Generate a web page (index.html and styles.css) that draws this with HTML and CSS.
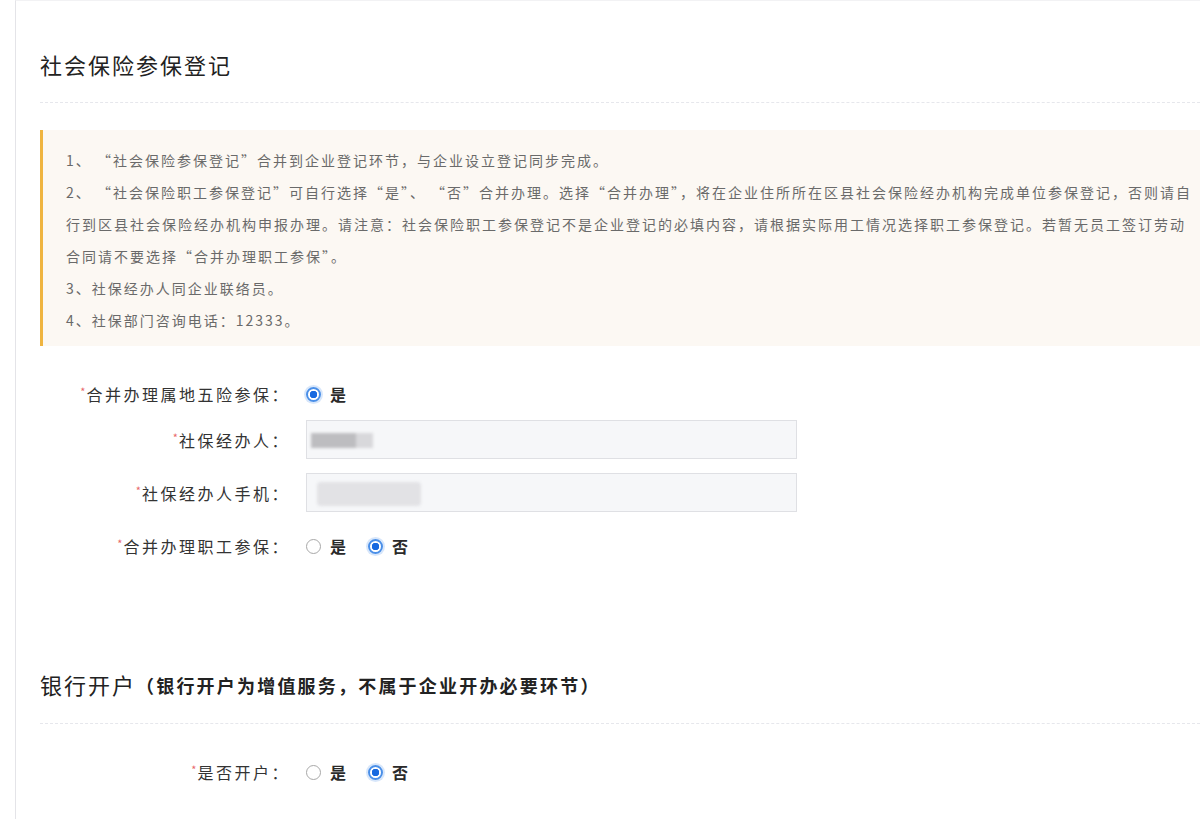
FILE: index.html
```html
<!DOCTYPE html>
<html lang="zh-CN">
<head>
<meta charset="utf-8">
<title>社会保险参保登记</title>
<link rel="stylesheet" href="styles.css">
</head>
<body>
<div class="page">
  <section class="section">
    <h2 class="section-title">社会保险参保登记</h2>
    <div class="notice">
      <div class="notice-line">1、 “社会保险参保登记”合并到企业登记环节，与企业设立登记同步完成。</div>
      <div class="notice-line">2、 “社会保险职工参保登记”可自行选择“是”、 “否”合并办理。选择“合并办理”，将在企业住所所在区县社会保险经办机构完成单位参保登记，否则请自行到区县社会保险经办机构申报办理。请注意：社会保险职工参保登记不是企业登记的必填内容，请根据实际用工情况选择职工参保登记。若暂无员工签订劳动合同请不要选择“合并办理职工参保”。</div>
      <div class="notice-line">3、社保经办人同企业联络员。</div>
      <div class="notice-line">4、社保部门咨询电话：12333。</div>
    </div>
    <div class="form">
      <div class="row row-radio row-first">
        <label class="label"><span class="req">*</span>合并办理属地五险参保：</label>
        <div class="control">
          <span class="radio"><span class="dot on"></span><span class="radio-text">是</span></span>
        </div>
      </div>
      <div class="row row-input">
        <label class="label"><span class="req">*</span>社保经办人：</label>
        <div class="control">
          <div class="input"><span class="blur blur-name"></span></div>
        </div>
      </div>
      <div class="row row-input row-gap">
        <label class="label"><span class="req">*</span>社保经办人手机：</label>
        <div class="control">
          <div class="input"><span class="blur blur-phone"></span></div>
        </div>
      </div>
      <div class="row row-radio row-last">
        <label class="label"><span class="req">*</span>合并办理职工参保：</label>
        <div class="control">
          <span class="radio"><span class="dot"></span><span class="radio-text">是</span></span>
          <span class="radio"><span class="dot on"></span><span class="radio-text">否</span></span>
        </div>
      </div>
    </div>
  </section>
  <section class="section section-bank">
    <h2 class="section-title">银行开户<span class="sub">（银行开户为增值服务，不属于企业开办必要环节）</span></h2>
    <div class="form">
      <div class="row row-radio row-bank">
        <label class="label"><span class="req">*</span>是否开户：</label>
        <div class="control">
          <span class="radio"><span class="dot"></span><span class="radio-text">是</span></span>
          <span class="radio"><span class="dot on"></span><span class="radio-text">否</span></span>
        </div>
      </div>
    </div>
  </section>
</div>
</body>
</html>
```
FILE: styles.css
```css
html, body {
  margin: 0;
  padding: 0;
  background: #ffffff;
  overflow: hidden;
}
body {
  font-family: "Noto Sans CJK SC", "Noto Sans", sans-serif;
  color: #333;
}
.page {
  margin-left: 15px;
  width: 1185px;
  min-height: 819px;
  border-left: 1px solid #e4e4e8;
  border-top: 1px solid #f2f2f4;
  padding-left: 24px;
  box-sizing: border-box;
}
.section {
  padding-top: 48px;
}
.section-bank {
  padding-top: 109px;
}
.section-title {
  margin: 0;
  font-size: 22px;
  font-weight: 400;
  letter-spacing: 2px;
  line-height: 30px;
  color: #222;
  padding-bottom: 23px;
  border-bottom: 1px dashed #e6e7ec;
}
.section-title .sub {
  font-size: 18px;
  font-weight: 700;
  letter-spacing: 2.2px;
  color: #222;
  vertical-align: 1px;
}
.notice {
  margin-top: 27px;
  background: #fcf8f3;
  border-left: 3px solid #efb440;
  padding: 14px 0 10px 23px;
}
.notice-line {
  font-size: 14px;
  line-height: 32px;
  letter-spacing: 2px;
  color: #6a6a6a;
}
.form {
  display: flex;
  flex-direction: column;
}
.row {
  display: grid;
  grid-template-columns: 250px 491px;
  column-gap: 16px;
  align-items: center;
}
.row-radio {
  height: 28px;
}
.row-input {
  height: 39px;
}
.row-first {
  margin-top: 34px;
  margin-bottom: 12px;
}
.row-gap {
  margin-top: 14px;
}
.row-last {
  margin-top: 20px;
}
.row-bank {
  margin-top: 34px;
}
.label {
  text-align: right;
  font-size: 16px;
  letter-spacing: 2.5px;
  color: #333;
  white-space: nowrap;
}
.req {
  color: #e8686a;
  font-size: 11px;
  vertical-align: 5px;
  letter-spacing: 0;
  margin-right: 1px;
}
.control {
  display: flex;
  align-items: center;
  gap: 22px;
}
.radio {
  display: inline-flex;
  align-items: center;
  gap: 9px;
}
.dot {
  width: 15px;
  height: 15px;
  border: 1px solid #a8a8a8;
  border-radius: 50%;
  box-sizing: border-box;
  background: #fff;
}
.dot.on {
  border: 2px solid #4a8fe8;
  background: radial-gradient(circle, #1769e0 0 3.5px, #fff 4px);
  box-shadow: 0 0 0 2px rgba(74, 143, 232, 0.22);
}
.radio-text {
  font-size: 16px;
  font-weight: 700;
  color: #2a2a2a;
}
.input {
  flex: 1;
  height: 39px;
  border: 1px solid #dfe0e4;
  background: #f6f7f9;
  box-sizing: border-box;
  position: relative;
}
.blur {
  position: absolute;
  filter: blur(1.5px);
}
.blur-name {
  left: 4px;
  top: 12px;
  width: 62px;
  height: 15px;
  background: linear-gradient(90deg, #bdbdc0 0 72%, #d8d8db 72% 100%);
}
.blur-phone {
  left: 10px;
  top: 8px;
  width: 104px;
  height: 24px;
  border-radius: 4px;
  background: #e2e2e5;
}
```
